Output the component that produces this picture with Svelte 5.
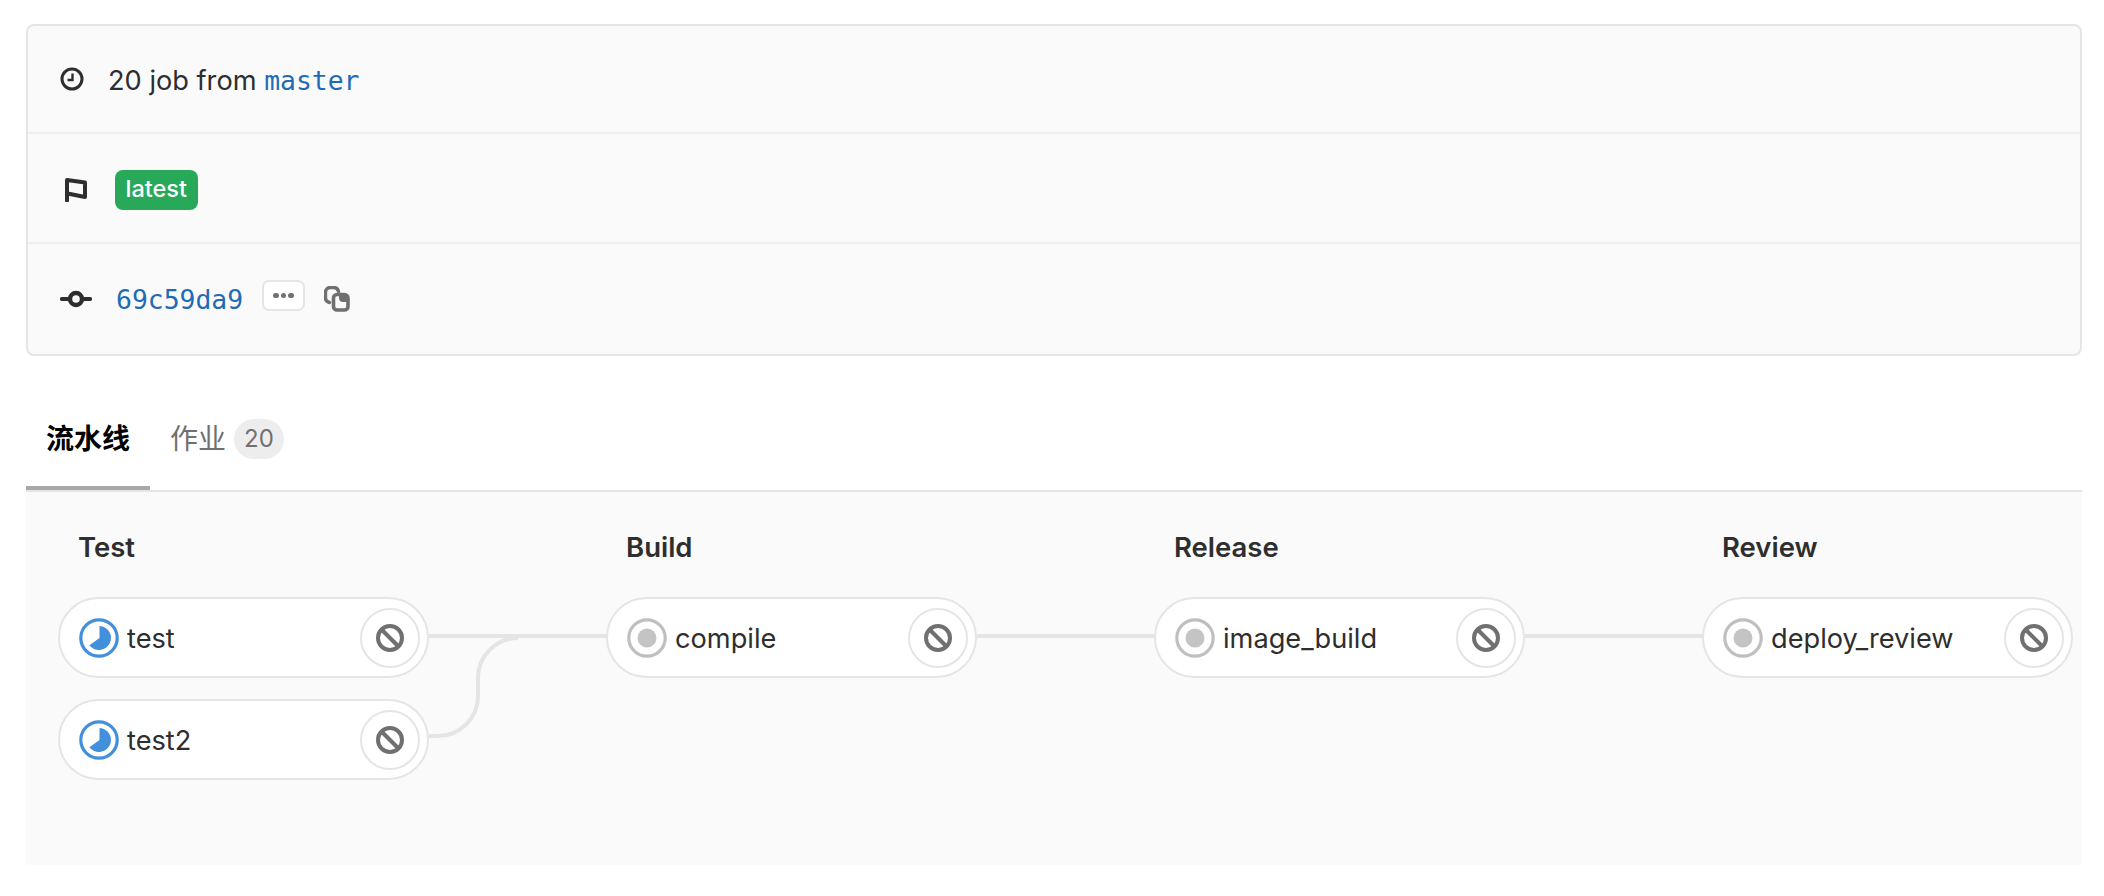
<script>
  const stages = [
    { title: 'Test', jobs: [{ name: 'test', status: 'running' }, { name: 'test2', status: 'running' }] },
    { title: 'Build', jobs: [{ name: 'compile', status: 'pending' }] },
    { title: 'Release', jobs: [{ name: 'image_build', status: 'pending' }] },
    { title: 'Review', jobs: [{ name: 'deploy_review', status: 'pending' }] }
  ];
</script>

<div class="page">
  <section class="card">
    <div class="row">
      <svg class="ic-clock" viewBox="0 0 24 24" aria-hidden="true">
        <circle cx="12" cy="12" r="10" fill="none" stroke="#2e2e2e" stroke-width="3" />
        <path d="M12.5 6.5V13H7.5" fill="none" stroke="#2e2e2e" stroke-width="2.4" />
      </svg>
      <span class="job-text">20 job from <a class="mono">master</a></span>
    </div>
    <div class="row">
      <svg class="ic-flag" viewBox="0 0 22 24" aria-hidden="true">
        <path d="M2 22.5V2L20 4.5V19L2.5 15.5" fill="none" stroke="#2e2e2e" stroke-width="4" stroke-linejoin="round" stroke-linecap="round" />
      </svg>
      <span class="badge">latest</span>
    </div>
    <div class="row">
      <svg class="ic-commit" viewBox="0 0 32 20" aria-hidden="true">
        <circle cx="16" cy="10" r="6" fill="none" stroke="#2e2e2e" stroke-width="4.4" />
        <path d="M2 10H10M22 10H30" fill="none" stroke="#2e2e2e" stroke-width="4.2" stroke-linecap="round" />
      </svg>
      <a class="mono sha">69c59da9</a>
      <span class="more"><i></i><i></i><i></i></span>
      <svg class="ic-copy" viewBox="0 0 26 26" aria-hidden="true">
        <path d="M5.5 16.5C3 16 1.5 14.5 1.5 12V6.5C1.5 3.5 3.5 1.5 6.5 1.5H10C12.5 1.5 14 3 14.5 5.5" fill="none" stroke="#707070" stroke-width="3.4" stroke-linecap="round" />
        <rect x="9.5" y="8.5" width="14.5" height="15.5" rx="3.5" fill="none" stroke="#707070" stroke-width="3.6" />
        <path d="M15 8H21C23.5 8 25 9.5 25 12V16H19C16.5 16 15 14.5 15 12Z" fill="#707070" />
      </svg>
    </div>
  </section>

  <nav class="tabs">
    <div class="tab active">流水线</div>
    <div class="tab">作业 <span class="count">20</span></div>
  </nav>

  <section class="panel">
    <svg class="links" viewBox="0 0 2056 373" aria-hidden="true">
      <path d="M403 144H581M403 244H412A40 40 0 0 0 452 204V186A40 40 0 0 1 492 146" />
      <path d="M951 144H1129M1499 144H1677" />
    </svg>
    <div class="graph">
      {#each stages as stage}
        <div class="stage">
          <h3>{stage.title}</h3>
          <div class="jobs">
            {#each stage.jobs as job}
              <div class="job">
                {#if job.status === 'running'}
                  <svg class="status" viewBox="0 0 40 40" aria-hidden="true">
                    <circle cx="20" cy="20" r="18.2" fill="#fff" stroke="#428fdc" stroke-width="3.2" />
                    <path d="M20.5 8A12 12 0 1 1 10.4 27.2L20.5 20Z" fill="#428fdc" />
                  </svg>
                {:else}
                  <svg class="status" viewBox="0 0 40 40" aria-hidden="true">
                    <circle cx="20" cy="20" r="18.2" fill="#fff" stroke="#bfbfbf" stroke-width="3.2" />
                    <circle cx="20" cy="20" r="9.5" fill="#c4c4c4" />
                  </svg>
                {/if}
                <span class="name">{job.name}</span>
                <span class="action">
                  <svg viewBox="0 0 28 28" aria-hidden="true">
                    <circle cx="14" cy="14" r="12" fill="none" stroke="#707070" stroke-width="4" />
                    <path d="M6 6L22 22" stroke="#707070" stroke-width="4" />
                  </svg>
                </span>
              </div>
            {/each}
          </div>
        </div>
      {/each}
    </div>
  </section>
</div>

<style>
  :global(body) {
    margin: 0;
    background: #fff;
  }
  .page {
    padding: 24px 22px 0 26px;
    font-family: Inter, "Noto Sans CJK SC", sans-serif;
    color: #2e2e2e;
  }
  .card {
    box-sizing: border-box;
    height: 332px;
    border: 2.5px solid #e5e5e5;
    border-radius: 8px;
    background: #fafafa;
    display: grid;
    grid-template-rows: 108px 110px 1fr;
  }
  .row {
    display: flex;
    align-items: center;
    padding-left: 32px;
    border-bottom: 2px solid #efefef;
    font-size: 27.2px;
  }
  .row:last-child {
    border-bottom: none;
  }
  .ic-clock {
    width: 24px;
    height: 24px;
    margin-right: 24px;
  }
  .job-text {
    white-space: pre;
    margin-top: 2px;
  }
  .mono {
    font-family: "DejaVu Sans Mono", monospace;
    font-size: 26.4px;
    color: #1f6bb5;
  }
  .ic-flag {
    width: 22px;
    height: 24px;
    margin: 3px 28px 0 5px;
  }
  .badge {
    background: #28a95a;
    color: #fff;
    font-size: 23.5px;
    font-weight: 500;
    height: 40px;
    line-height: 38px;
    padding: 0 10.5px;
    border-radius: 8px;
    margin-top: 3px;
  }
  .ic-commit {
    width: 32px;
    height: 20px;
    margin-right: 24px;
  }
  .more {
    box-sizing: border-box;
    width: 43px;
    height: 31px;
    margin: -7px 0 0 19px;
    background: #fff;
    border: 2.5px solid #e5e5e5;
    border-radius: 7px;
    display: flex;
    align-items: center;
    justify-content: center;
    gap: 2px;
  }
  .more i {
    width: 5.5px;
    height: 5.5px;
    border-radius: 50%;
    background: #707070;
  }
  .ic-copy {
    width: 26px;
    height: 26px;
    margin-left: 19px;
  }
  .tabs {
    display: flex;
    height: 133px;
    border-bottom: 2px solid #e5e5e5;
    margin-top: 1px;
  }
  .tab {
    box-sizing: border-box;
    height: 133px;
    padding: 62px 20px 0;
    font-size: 28px;
    line-height: 40px;
    color: #707070;
    white-space: pre;
  }
  .tab.active {
    width: 124px;
    color: #000;
    font-weight: 700;
    border-bottom: 4px solid #a8a8a8;
  }
  .count {
    display: inline-block;
    width: 50px;
    height: 40px;
    border-radius: 20px;
    background: #ededed;
    font-size: 24px;
    text-align: center;
    vertical-align: top;
  }
  .panel {
    position: relative;
    height: 373px;
    background: #fafafa;
  }
  .links {
    position: absolute;
    left: 0;
    top: 0;
    width: 2056px;
    height: 373px;
    fill: none;
    stroke: #e5e5e5;
    stroke-width: 4;
  }
  .graph {
    position: relative;
    display: grid;
    grid-template-columns: repeat(3, 548px) 1fr;
    padding-left: 32px;
  }
  .stage h3 {
    margin: 0;
    padding: 37px 0 0 20px;
    font-size: 27.5px;
    line-height: 36px;
    font-weight: 600;
    color: #2e2e2e;
  }
  .jobs {
    display: flex;
    flex-direction: column;
    gap: 21px;
    margin-top: 32px;
  }
  .job {
    box-sizing: border-box;
    width: 371px;
    height: 81px;
    border: 2.5px solid #e5e5e5;
    border-radius: 40.5px;
    background: #fff;
    display: flex;
    align-items: center;
    padding: 0 7px 0 19px;
  }
  .status {
    width: 40px;
    height: 40px;
    flex: none;
  }
  .name {
    margin-left: 8px;
    margin-top: 2px;
    font-size: 27.2px;
    flex: 1;
  }
  .action {
    box-sizing: border-box;
    width: 60px;
    height: 60px;
    border: 2.5px solid #e5e5e5;
    border-radius: 50%;
    display: flex;
    align-items: center;
    justify-content: center;
  }
  .action svg {
    width: 28px;
    height: 28px;
  }
</style>
